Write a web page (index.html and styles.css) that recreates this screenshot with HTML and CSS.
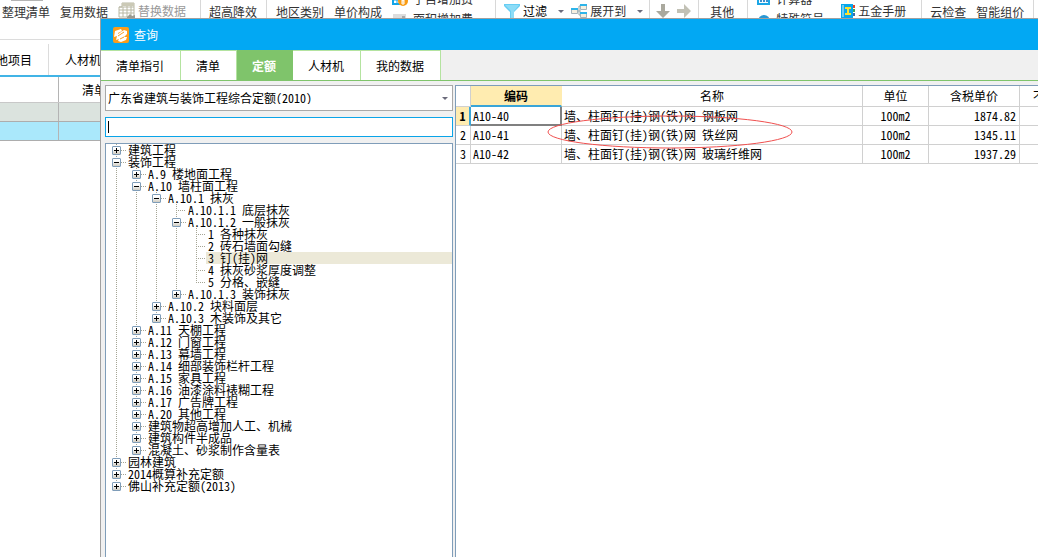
FILE: index.html
```html
<!DOCTYPE html>
<html lang="zh-CN">
<head>
<meta charset="utf-8">
<title>查询</title>
<link rel="stylesheet" href="styles.css">
</head>
<body>
<main class="app">
  <header class="ribbon">
    <div class="group first">
      <button class="tool drop top-bar">整理清单</button>
      <button class="tool">复用数据</button>
      <button class="tool with-icon muted">
        <svg width="18" height="18" viewBox="0 0 18 18"><path d="M4 1h12v14H1V5h3z" fill="#fff" stroke="#b9b8a4"/><path d="M4 1h12v3H4z" fill="#cbc9b6"/><path d="M1 8h15M1 11h15M5 5v10M9 4v11M13 4v11M1 5h15" stroke="#b9b8a4"/><path d="M9 15l3-3 2 2 3-1v5H9z" fill="#9c9b90"/></svg>
        替换数据</button>
    </div>
    <div class="group"><button class="tool drop">超高降效</button></div>
    <div class="group wide">
      <button class="tool">地区类别</button>
      <button class="tool">单价构成</button>
      <div class="stack">
        <button class="tool with-icon">
          <svg width="16" height="16" viewBox="0 0 16 16"><path d="M1 2h12v11H1z" fill="#fff" stroke="#12a5ea" stroke-width="2"/><path d="M1 9h12M5 2v11M9 2v11" stroke="#12a5ea"/><circle cx="11" cy="10" r="5" fill="#f99c14"/><path d="M9 7l2 3 2-3M9 10h4M9 12h4M11 10v4" stroke="#fff" fill="none"/></svg>
          子目增加费</button>
        <button class="tool with-icon">
          <svg width="16" height="16" viewBox="0 0 16 16"><path d="M1 3h13v12H1z" fill="#ddd"/><path d="M3 10h4V8h3V5h3v8H3z" fill="#aaa"/></svg>
          面积增加费</button>
      </div>
    </div>
    <div class="group filters">
      <button class="tool with-icon dark">
        <svg width="16" height="16" viewBox="0 0 16 16"><path d="M0 1h16v2l-6 6v7H6V9L0 3z" fill="#66cdf3"/><path d="M1 2h14l-5 6v7H7V8z" fill="#8cdcf7"/></svg>
        过滤<span class="caret"></span></button>
      <button class="tool with-icon">
        <svg width="16" height="16" viewBox="0 0 16 16"><path d="M6 8h4M8 3v9M8 3h2M8 12h2" stroke="#9aa" fill="none"/><path d="M.5 5.500h6v5h-6zM9.500 1.500h6v5h-6zM9.500 9.500h6v5h-6z" fill="#f5efdf" stroke="#a7b3ba"/><path d="M0 5h7v2H0zM9 1h7v2H9zM9 9h7v2H9z" fill="#2eb4e9"/></svg>
        展开到<span class="caret"></span></button>
    </div>
    <div class="group arrows">
      <button class="tool with-icon" aria-label="下移"><svg width="14" height="16" viewBox="0 0 14 16"><path d="M5 1h4v7h5l-7 7-7-7h5z" fill="#aaa99e"/></svg></button>
      <button class="tool with-icon" aria-label="右移"><svg width="16" height="16" viewBox="0 0 16 16"><path d="M1 6h7V1l7 7-7 7v-5H1z" fill="#c2c1b5"/></svg></button>
    </div>
    <div class="group other"><button class="tool">其他</button></div>
    <div class="group utils">
      <div class="stack">
        <button class="tool with-icon">
          <svg width="14" height="16" viewBox="0 0 14 16"><path d="M1 1h11v12H1z" fill="#f4fbff" stroke="#1ba6e6" stroke-width="2"/><path d="M3 7h8M3 10h8" stroke="#3e8fce" stroke-width="2" stroke-dasharray="2 1"/></svg>
          计算器</button>
        <button class="tool with-icon">
          <svg width="14" height="16" viewBox="0 0 14 16"><circle cx="7" cy="10" r="6" fill="#2a97d3"/></svg>
          特殊符号</button>
      </div>
      <button class="tool with-icon">
        <svg width="14" height="16" viewBox="0 0 14 16"><path d="M0 1h12v15H0z" fill="#08a7ec"/><path d="M2 2v12" stroke="#d9f4ff"/><path d="M4 5h6M7 5v6M4 11h6" stroke="#ffe230" stroke-width="2"/><path d="M12 2h2v3h-2z" fill="#e5482d"/><path d="M12 6h2v3h-2z" fill="#37a85a"/><path d="M12 10h2v3h-2z" fill="#3c6aa8"/></svg>
        五金手册</button>
    </div>
    <div class="group cloud">
      <button class="tool">云检查</button>
      <button class="tool">智能组价</button>
    </div>
  </header>
  <nav class="sheet-tabs"><a href="#" class="project">其他项目</a><a href="#">人材机汇总</a></nav>
  <div class="sheet">
    <div class="sheet-row head"><span></span><span>清单编码</span></div>
    <div class="sheet-row total"><span></span><span></span></div>
    <div class="sheet-row current"><span></span><span></span></div>
  </div>
</main>

<section class="dialog" role="dialog" aria-labelledby="dialog-title">
  <header class="title-bar">
    <svg width="16" height="16" viewBox="0 0 16 16"><rect width="16" height="16" rx="2" fill="#fb9d1c"/><path d="M2 4l6-2 1 2-4 2v1l6-4 3 1v3l-3 3h3l-1 3-5 2-3-1 1-2-3 1 1-4-3 1z" fill="#fff"/><path d="M5 9l6-4M7 12l4-2" stroke="#fb9d1c"/></svg>
    <h1 id="dialog-title">查询</h1>
  </header>
  <nav class="tabs" role="tablist">
    <button role="tab" class="tab">清单指引</button>
    <button role="tab" class="tab">清单</button>
    <button role="tab" class="tab active" aria-selected="true">定额</button>
    <button role="tab" class="tab">人材机</button>
    <button role="tab" class="tab">我的数据</button>
  </nav>
  <div class="content">
    <aside class="side">
      <div class="combo">
        <select aria-label="定额库"><option>广东省建筑与装饰工程综合定额(2010)</option></select>
      </div>
      <input class="search" type="text" aria-label="搜索定额">
      <div class="tree-box">
        <ul class="tree">
          <li><div class="row"><button class="box plus" aria-label="展开"></button><span>建筑工程</span></div></li>
          <li><div class="row"><button class="box" aria-label="折叠"></button><span>装饰工程</span></div>
            <ul>
              <li><div class="row"><button class="box plus" aria-label="展开"></button><span>A.9 楼地面工程</span></div></li>
              <li><div class="row"><button class="box" aria-label="折叠"></button><span>A.10 墙柱面工程</span></div>
                <ul>
                  <li><div class="row"><button class="box" aria-label="折叠"></button><span>A.10.1 抹灰</span></div>
                    <ul>
                      <li><div class="row"><span>A.10.1.1 底层抹灰</span></div></li>
                      <li><div class="row"><button class="box" aria-label="折叠"></button><span>A.10.1.2 一般抹灰</span></div>
                        <ul>
                          <li><div class="row"><span>1 各种抹灰</span></div></li>
                          <li><div class="row"><span>2 砖石墙面勾缝</span></div></li>
                          <li><div class="row"><span class="selected">3 钉(挂)网</span></div></li>
                          <li><div class="row"><span>4 抹灰砂浆厚度调整</span></div></li>
                          <li><div class="row"><span>5 分格、嵌缝</span></div></li>
                        </ul>
                      </li>
                      <li><div class="row"><button class="box plus" aria-label="展开"></button><span>A.10.1.3 装饰抹灰</span></div></li>
                    </ul>
                  </li>
                  <li><div class="row"><button class="box plus" aria-label="展开"></button><span>A.10.2 块料面层</span></div></li>
                  <li><div class="row"><button class="box plus" aria-label="展开"></button><span>A.10.3 木装饰及其它</span></div></li>
                </ul>
              </li>
              <li><div class="row"><button class="box plus" aria-label="展开"></button><span>A.11 天棚工程</span></div></li>
              <li><div class="row"><button class="box plus" aria-label="展开"></button><span>A.12 门窗工程</span></div></li>
              <li><div class="row"><button class="box plus" aria-label="展开"></button><span>A.13 幕墙工程</span></div></li>
              <li><div class="row"><button class="box plus" aria-label="展开"></button><span>A.14 细部装饰栏杆工程</span></div></li>
              <li><div class="row"><button class="box plus" aria-label="展开"></button><span>A.15 家具工程</span></div></li>
              <li><div class="row"><button class="box plus" aria-label="展开"></button><span>A.16 油漆涂料裱糊工程</span></div></li>
              <li><div class="row"><button class="box plus" aria-label="展开"></button><span>A.17 广告牌工程</span></div></li>
              <li><div class="row"><button class="box plus" aria-label="展开"></button><span>A.20 其他工程</span></div></li>
              <li><div class="row"><button class="box plus" aria-label="展开"></button><span>建筑物超高增加人工、机械</span></div></li>
              <li><div class="row"><button class="box plus" aria-label="展开"></button><span>建筑构件半成品</span></div></li>
              <li><div class="row"><button class="box plus" aria-label="展开"></button><span>混凝土、砂浆制作含量表</span></div></li>
            </ul>
          </li>
          <li><div class="row"><button class="box plus" aria-label="展开"></button><span>园林建筑</span></div></li>
          <li><div class="row"><button class="box plus" aria-label="展开"></button><span>2014概算补充定额</span></div></li>
          <li><div class="row"><button class="box plus" aria-label="展开"></button><span>佛山补充定额(2013)</span></div></li>
        </ul>
      </div>
    </aside>
    <div class="grid-pane">
      <table class="grid">
        <colgroup><col class="c-no"><col class="c-code"><col><col class="c-unit"><col class="c-price"><col class="c-rest"></colgroup>
        <thead>
          <tr><th></th><th class="picked">编码</th><th>名称</th><th>单位</th><th>含税单价</th><th class="cut">不含税单价</th></tr>
        </thead>
        <tbody>
          <tr><th class="picked">1</th><td class="focus">A10-40</td><td>墙、柱面钉(挂)钢(铁)网 钢板网</td><td class="mid">100m2</td><td class="num">1874.82</td><td></td></tr>
          <tr><th>2</th><td>A10-41</td><td>墙、柱面钉(挂)钢(铁)网 铁丝网</td><td class="mid">100m2</td><td class="num">1345.11</td><td></td></tr>
          <tr><th>3</th><td>A10-42</td><td>墙、柱面钉(挂)钢(铁)网 玻璃纤维网</td><td class="mid">100m2</td><td class="num">1937.29</td><td></td></tr>
        </tbody>
      </table>
      <svg class="mark" width="248" height="36" viewBox="0 0 248 36"><ellipse cx="124" cy="18" rx="122" ry="16" fill="none" stroke="#f0504f"/></svg>
    </div>
  </div>
</section>
</body>
</html>
```

FILE: styles.css
```css
* { box-sizing: border-box; }

body {
  margin: 0;
  height: 100vh;
  position: relative;
  overflow: hidden;
  background: #fff;
  color: #000;
  font: 12px/12px "Noto Sans CJK SC", sans-serif;
  font-feature-settings: "hwid";
}

button, input, select {
  font: inherit;
  font-feature-settings: inherit;
  color: inherit;
  margin: 0;
  padding: 0;
  border: 0;
  border-radius: 0;
  background: none;
}

a { color: inherit; text-decoration: none; }
ul { list-style: none; margin: 0; padding: 0; }
svg { display: block; flex: none; }

/* Main window behind the dialog */
.ribbon {
  display: flex;
  height: 40px;
  overflow: hidden;
  border-bottom: 1px solid #dcdcdc;
  color: #333;
}

.group {
  display: flex;
  flex: none;
  align-items: flex-start;
  gap: 10px;
  padding: 0 9px 0 8px;
  border-right: 1px solid #d8d8d8;
}

.group.first { padding: 0 14px 0 2px; }
.group.wide { padding: 0 22px 0 9px; }
.group.filters { gap: 7px; padding: 0 6px 0 8px; }
.group.arrows { gap: 6px; padding: 0 6px; }
.group.other { padding: 0 13px 0 11px; }
.group.utils { gap: 17px; padding: 0 15px 0 9px; }

.tool {
  position: relative;
  height: 24px;
  line-height: 24px;
  white-space: nowrap;
}

.with-icon {
  display: flex;
  align-items: center;
  gap: 3px;
  height: 22px;
  line-height: 22px;
}

.first .with-icon { gap: 2px; }
.muted { color: #999; }
.dark { color: #000; }

.drop::after {
  content: "";
  position: absolute;
  left: 22px;
  top: 17px;
  border: 3px solid transparent;
  border-top-color: #6b6b7b;
}

.top-bar::before {
  content: "";
  position: absolute;
  left: 9px;
  top: 0;
  width: 32px;
  height: 1px;
  background: #b4b4b4;
}

.caret {
  margin: 3px 0 0 8px;
  border: 3px solid transparent;
  border-top-color: #6b6b7b;
}

.stack { margin-top: -11px; }
.stack .tool { height: 20px; line-height: 20px; gap: 5px; }

.sheet-tabs {
  display: flex;
  height: 37px;
  padding-top: 4px;
  border-bottom: 2px solid #41b4e6;
  line-height: 32px;
}

.sheet-tabs a { padding: 0 16px; }
.sheet-tabs .project { margin-left: -32px; border-right: 1px solid #dcdcdc; }

.sheet-row { display: flex; height: 19px; border-bottom: 1px solid #adadad; }
.sheet-row span { flex: 1; padding-left: 23px; }
.sheet-row span:first-child { flex: 0 0 59px; border-right: 1px solid #b4b4b4; }
.head { height: 26px; line-height: 25px; border-color: #c8c8c8; }
.total { background: #dbe3de; }
.current { background: #aae8fb; }

/* Query dialog */
.dialog {
  position: absolute;
  inset: 18px 0 0 100px;
  display: flex;
  flex-direction: column;
  border: 1px solid #a0a0a0;
  border-width: 1px 0 0 1px;
  background: #f0f0f0;
}

.title-bar {
  display: flex;
  align-items: center;
  gap: 5px;
  height: 31px;
  padding-left: 12px;
  background: #02a8f3;
  color: #fff;
}

.title-bar h1 { margin: 0; font-size: 12px; font-weight: 400; }

.tabs {
  display: flex;
  height: 31px;
  border-bottom: 1px solid #7fc46b;
}

.tab {
  padding: 0 16px 0 15px;
  border: 1px solid #b4e3a0;
  border-width: 1px 1px 0 0;
  background: #fff;
  line-height: 30px;
}

.tab.active { border-color: #7fc46b; background: #7fc46b; color: #fff; font-weight: 700; }

.content {
  display: flex;
  flex: 1;
  gap: 2px;
  min-height: 0;
  padding: 4px 0 0 4px;
}

.side {
  display: flex;
  flex: 0 0 348px;
  flex-direction: column;
  gap: 6px;
}

.combo { position: relative; }

.combo::after {
  content: "";
  position: absolute;
  right: 5px;
  top: 12px;
  border: 3px solid transparent;
  border-top-color: #6b6b7b;
  pointer-events: none;
}

.combo select {
  display: block;
  width: 100%;
  height: 26px;
  padding-left: 2px;
  appearance: none;
  border: 1px solid #a8a8a8;
  background: #fff;
}

.search {
  height: 20px;
  padding: 0 2px;
  border: 1px solid #0aa4e8;
  background: linear-gradient(#000, #000) 2px 3px / 1px 12px no-repeat #fff;
}

.tree-box {
  flex: 1;
  min-height: 0;
  overflow: hidden;
  border: 1px solid #7f9db9;
  border-bottom: 0;
  background: #fff;
}

.tree { padding-left: 6px; }
.tree ul { padding-left: 20px; }
.tree li { position: relative; }

.tree li::before {
  content: "";
  position: absolute;
  left: 4px;
  top: 0;
  bottom: 0;
  width: 1px;
  background: repeating-linear-gradient(#a5a595 0 1px, transparent 1px 2px);
}

.tree li:last-child::before { bottom: auto; height: 6px; }

.row {
  display: flex;
  align-items: center;
  height: 12px;
  white-space: nowrap;
}

.row::before {
  content: "";
  order: 1;
  flex: 1;
  max-width: 10px;
  height: 1px;
  margin-left: 4px;
  background: repeating-linear-gradient(90deg, #a5a595 0 1px, transparent 1px 2px);
}

.row span { order: 2; flex: 1; padding-left: 2px; }
.row:has(.box)::before { max-width: 5px; margin-left: 0; }

.box {
  position: relative;
  flex: none;
  width: 9px;
  height: 9px;
  border: 1px solid #7f9db9;
  border-radius: 1px;
  background: linear-gradient(#000, #000) center / 5px 1px no-repeat, linear-gradient(#fff 30%, #cfccc2);
}

.box.plus {
  background: linear-gradient(#000, #000) center / 5px 1px no-repeat, linear-gradient(#000, #000) center / 1px 5px no-repeat, linear-gradient(#fff 30%, #cfccc2);
}

.selected { background: #ece9d8; }

.grid-pane {
  position: relative;
  flex: 1;
  min-width: 0;
  overflow: hidden;
  border: 1px solid #7f9db9;
  border-width: 1px 0 0 1px;
  background: #fff;
}

.grid {
  width: 100%;
  table-layout: fixed;
  border-collapse: separate;
  border-spacing: 0;
}

.c-no { width: 15px; }
.c-code { width: 91px; }
.c-unit { width: 66px; }
.c-price { width: 91px; }
.c-rest { width: 18px; }

.grid th, .grid td {
  height: 19px;
  padding: 0 0 0 2px;
  border: 1px solid #d0d0d0;
  border-width: 0 1px 1px 0;
  overflow: hidden;
  white-space: nowrap;
  font-weight: 400;
  text-align: left;
}

.grid th { padding: 0; text-align: center; }
.grid thead th { height: 21px; }
.grid tr > :last-child { border-right: 0; }
.grid .mid { padding: 0; text-align: center; }
.grid .num { padding-right: 3px; text-align: right; }
.grid .cut { padding-left: 13px; text-align: left; text-overflow: clip; }
.grid .picked { background: #ffecb0; font-weight: 700; }
.grid thead .picked { border-bottom: 2px solid #39a5d8; border-right-color: #ffecb0; }
.grid tbody .picked { border-right: 2px solid #39a5d8; }
.grid .focus { border-right: 2px solid #808080; border-bottom: 2px solid #808080; }

.mark {
  position: absolute;
  left: 90px;
  top: 28px;
  pointer-events: none;
}
```
